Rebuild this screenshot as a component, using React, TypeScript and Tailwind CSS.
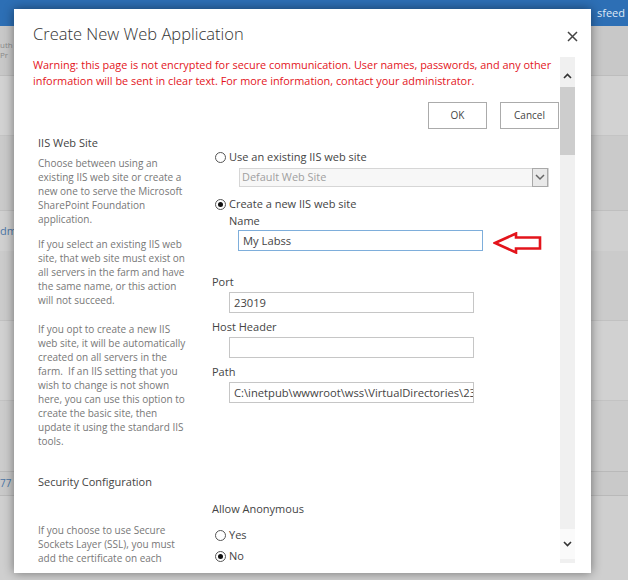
import React from 'react';

const font = { fontFamily: '"Open Sans", "Noto Sans", sans-serif' };

function Radio({ checked, label }: { checked?: boolean; label: string }) {
  return (
    <div className="flex items-center h-[18px] text-[11px] text-[#444]">
      <span className="ml-[3px] w-[11px] h-[11px] rounded-full border border-[#555] bg-white flex items-center justify-center">
        {checked && <span className="w-[5px] h-[5px] rounded-full bg-[#111]" />}
      </span>
      <span className="ml-[3px]">{label}</span>
    </div>
  );
}

function Field({ value, className }: { value?: string; className: string }) {
  return (
    <div
      className={`h-[21px] border bg-white px-[4px] text-[11.2px] leading-[19px] text-[#444] whitespace-nowrap overflow-hidden ${className}`}
    >
      {value}
    </div>
  );
}

export default function App() {
  return (
    <div className="relative w-[628px] h-[580px] overflow-hidden bg-[#cdcdcd]" style={font}>
      {/* page behind the dialog */}
      <div className="h-[26px] bg-[#2d6fb5] flex items-center justify-end pr-[3px]">
        <span className="text-[11px] text-[#dfe9f5]">sfeed</span>
      </div>
      <div className="flex flex-col">
        <div className="h-[50px] bg-[#c8c8c8] border-b border-[#bdbdbd] text-[8px] text-[#8a8a8a] leading-[10px] pt-[14px]">
          <div>uth</div>
          <div>Pr</div>
        </div>
        <div className="h-[60px] bg-[#d2d2d2] border-b border-[#c4c4c4]" />
        <div className="h-[75px] bg-[#cacaca] border-b border-[#bfbfbf]" />
        <div className="h-[40px] bg-[#d0d0d0] text-[11px] text-[#4b76a6] leading-[40px]">dm</div>
        <div className="h-[70px] bg-[#cbcbcb] border-b border-[#c1c1c1]" />
        <div className="h-[80px] bg-[#d1d1d1] border-b border-[#c3c3c3]" />
        <div className="h-[70px] bg-[#cccccc]" />
        <div className="h-[25px] bg-[#c9c9c9] border-y border-[#b9b9b9] text-[10px] text-[#4b76a6] leading-[22px]">77</div>
        <div className="h-[90px] bg-[#cfcfcf]" />
      </div>

      {/* dialog */}
      <div className="absolute left-[14px] top-[9px] w-[577px] h-[564px] bg-white shadow-[0_0_10px_rgba(0,0,0,0.45)] flex flex-col">
        <div className="h-[48px] flex items-start pl-[19px] pr-[13px] pt-[13px]">
          <h1 className="flex-1 text-[16.5px] leading-[24px] font-light text-[#333]">Create New Web Application</h1>
          <svg width="11" height="11" viewBox="0 0 11 11" className="mt-[9px]">
            <path d="M1 1 L10 10 M10 1 L1 10" stroke="#444" strokeWidth="1.5" />
          </svg>
        </div>

        <div className="flex h-[510px]">
          <div className="flex-1 pl-[19px] overflow-hidden">
            <p className="text-[10.9px] leading-[16px] text-[#e3141b] whitespace-nowrap">
              Warning: this page is not encrypted for secure communication. User names, passwords, and any other
              <br />
              information will be sent in clear text. For more information, contact your administrator.
            </p>

            <div className="flex justify-end gap-[13px] mt-[13px]">
              <button className="w-[59px] h-[27px] border border-[#ababab] bg-white text-[10px] text-[#444]">OK</button>
              <button className="w-[59px] h-[27px] border border-[#ababab] bg-white text-[10px] text-[#444]">Cancel</button>
            </div>

            <div className="flex mt-[5px]">
              <div className="w-[179px] pl-[5px] text-[#777] text-[10px] leading-[14px] whitespace-nowrap">
                <h2 className="text-[11px] leading-[18px] text-[#444]">IIS Web Site</h2>
                <p className="mt-[4px]">
                  Choose between using an<br />
                  existing IIS web site or create a<br />
                  new one to serve the Microsoft<br />
                  SharePoint Foundation<br />
                  application.
                </p>
                <p className="mt-[11px]">
                  If you select an existing IIS web<br />
                  site, that web site must exist on<br />
                  all servers in the farm and have<br />
                  the same name, or this action<br />
                  will not succeed.
                </p>
                <p className="mt-[15px]">
                  If you opt to create a new IIS<br />
                  web site, it will be automatically<br />
                  created on all servers in the<br />
                  farm.&nbsp; If an IIS setting that you<br />
                  wish to change is not shown<br />
                  here, you can use this option to<br />
                  create the basic site, then<br />
                  update it using the standard IIS<br />
                  tools.
                </p>
                <h2 className="mt-[25px] text-[11px] leading-[18px] text-[#444]">Security Configuration</h2>
                <p className="mt-[32px]">
                  If you choose to use Secure<br />
                  Sockets Layer (SSL), you must<br />
                  add the certificate on each
                </p>
              </div>

              <div className="flex-1 pt-[14px] text-[11px] text-[#444]">
                <Radio label="Use an existing IIS web site" />
                <div className="ml-[27px] mt-[2px] w-[310px] h-[19px] border border-[#d6d6d6] bg-[#f7f7f7] flex items-center">
                  <span className="flex-1 pl-[2px] text-[10.9px] text-[#a0a0a0]">Default Web Site</span>
                  <span className="w-[16px] h-[19px] border border-[#a9a9a9] bg-[#e9e9e9] flex items-center justify-center">
                    <svg width="10" height="7" viewBox="0 0 10 7">
                      <path d="M1 1 L5 5 L9 1" stroke="#666" strokeWidth="1.5" fill="none" />
                    </svg>
                  </span>
                </div>
                <div className="mt-[8px]">
                  <Radio checked label="Create a new IIS web site" />
                </div>
                <div className="ml-[17px] leading-[16px]">Name</div>
                <div className="flex items-start h-[21px] mt-[1px] ml-[26px]">
                  <Field value="My Labss" className="w-[245px] border-[#7eaedb]" />
                  <svg width="50" height="22" viewBox="0 0 50 22" className="ml-[10px] mt-[2px] shrink-0">
                    <path
                      d="M2 11 L23 1.5 L23 5.5 L47 5.5 L47 16.5 L23 16.5 L23 20.5 Z"
                      fill="white"
                      stroke="#e3141b"
                      strokeWidth="2.6"
                    />
                  </svg>
                </div>

                <div className="mt-[23px] leading-[16px]">Port</div>
                <Field value="23019" className="ml-[17px] mt-[2px] w-[245px] border-[#c6c6c6]" />
                <div className="mt-[6px] leading-[16px]">Host Header</div>
                <Field className="ml-[17px] mt-[2px] w-[245px] border-[#c6c6c6]" />
                <div className="mt-[6px] leading-[16px]">Path</div>
                <Field
                  value="C:\inetpub\wwwroot\wss\VirtualDirectories\23019"
                  className="ml-[17px] mt-[2px] w-[245px] border-[#c6c6c6]"
                />

                <div className="mt-[98px] leading-[16px]">Allow Anonymous</div>
                <div className="mt-[9px]">
                  <Radio label="Yes" />
                </div>
                <div className="mt-[3px]">
                  <Radio checked label="No" />
                </div>
              </div>
            </div>
          </div>

          {/* scrollbar */}
          <div className="w-[15px] ml-[1px] mr-[16px] mb-[4px] bg-[#f0f0f0] flex flex-col items-center">
            <div className="h-[30px] w-full flex items-center justify-center pt-[7px]">
              <svg width="9" height="6" viewBox="0 0 9 6">
                <path d="M1 5 L4.5 1.5 L8 5" stroke="#333" strokeWidth="1.6" fill="none" />
              </svg>
            </div>
            <div className="w-full h-[68px] bg-[#cdcdcd]" />
            <div className="flex-1" />
            <div className="h-[30px] w-full flex items-center justify-center bg-[#fafafa] mb-[4px]">
              <svg width="9" height="6" viewBox="0 0 9 6">
                <path d="M1 1 L4.5 4.5 L8 1" stroke="#333" strokeWidth="1.6" fill="none" />
              </svg>
            </div>
          </div>
        </div>
      </div>
    </div>
  );
}
